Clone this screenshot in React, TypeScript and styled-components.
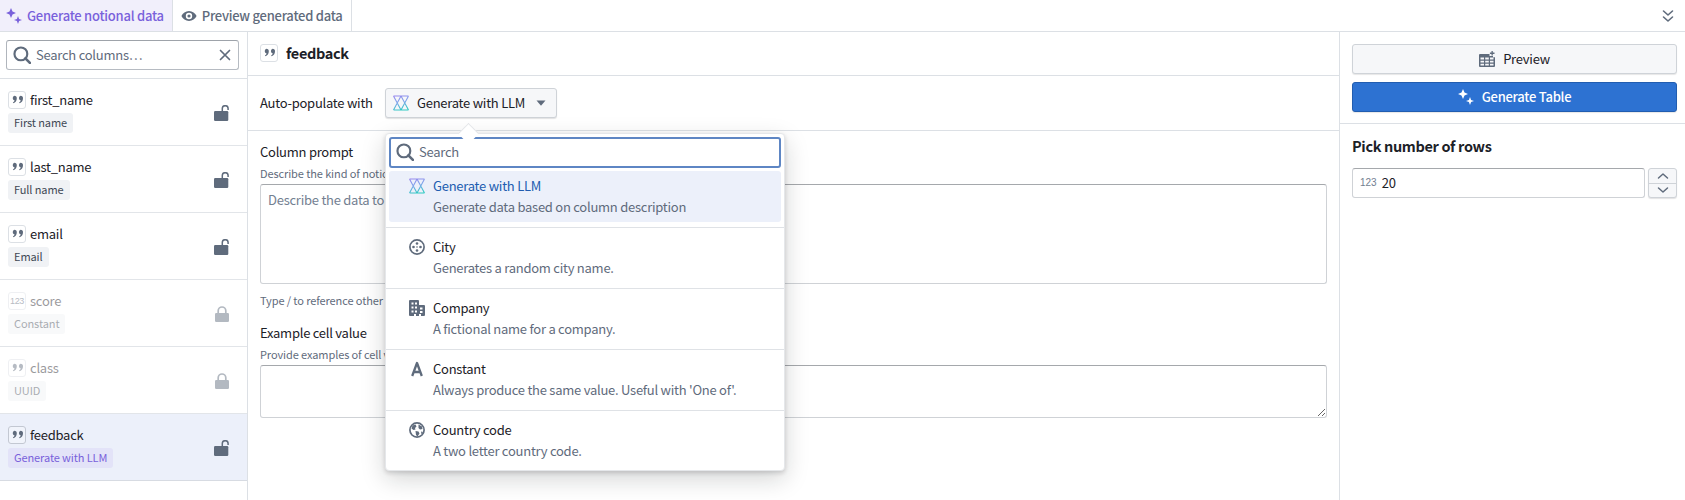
import React from "react";
import styled, { createGlobalStyle } from "styled-components";

const FONT = `"Noto Sans CJK SC", "Source Sans 3", "Noto Sans", sans-serif`;
const Global = createGlobalStyle`
  html, body { margin: 0; padding: 0; background: #fff; }
  body { font-family: ${FONT}; font-size: 13px; letter-spacing: -0.25px; line-height: 20px; color: #1c2127; overflow: hidden; }
  * { box-sizing: border-box; }
`;

const Page = styled.div`display: flex; flex-direction: column; height: 500px; width: 1685px;`;
const TabBar = styled.div`display: flex; height: 32px; flex: none; border-bottom: 1px solid #dce0e5;`;
const Tab = styled.div<{ $active?: boolean }>`
  display: flex; align-items: center; gap: 5px; height: 31px; font-weight: 500; font-size: 13px; letter-spacing: -0.25px;
  padding: ${(p) => (p.$active ? "0 8px 0 6px" : "0 8px 0 8px")};
  border-right: 1px solid #dce0e5;
  background: ${(p) => (p.$active ? "#f1effb" : "#fff")};
  color: ${(p) => (p.$active ? "#7961db" : "#5f6b7c")};
`;
const TabSpacer = styled.div`flex: 1;`;
const CollapseBtn = styled.div`display: flex; align-items: center; padding-right: 11px; color: #5f6b7c;`;
const Body = styled.div`display: flex; flex: 1; min-height: 0;`;

const LeftPanel = styled.aside`width: 248px; flex: none; border-right: 1px solid #dce0e5;`;
const LeftSearchWrap = styled.div`height: 47px; padding: 8px 8px 0 6px; border-bottom: 1px solid #dce0e5;`;
const LeftSearch = styled.div`
  height: 30px; border: 1px solid #b6bbc2; border-radius: 3px; display: flex; align-items: center;
  padding: 0 7px 0 6px; gap: 5px; color: #5f6b7c; border-top-color: #9ea3aa; border-left-color: #b0b5bc;
`;
const SearchText = styled.span`flex: 1; color: #5f6b7c;`;

const Row = styled.div<{ $selected?: boolean }>`
  height: 67px; border-bottom: 1px solid ${(p) => (p.$selected ? "#d7dbe2" : "#e2e5e9")};
  display: flex; align-items: center; justify-content: space-between;
  padding: 0 17px 0 8px;
  background: ${(p) => (p.$selected ? "#ecf0fa" : "#fff")};
`;
const RowMain = styled.div<{ $disabled?: boolean }>`
  display: flex; flex-direction: column; gap: 4px;
  opacity: ${(p) => (p.$disabled ? 0.45 : 1)};
`;
const RowTitle = styled.div`display: flex; align-items: center; gap: 4px; height: 18px;`;
const TypeBox = styled.span`
  width: 18px; height: 18px; flex: none; display: inline-flex; align-items: center; justify-content: center;
  border: 1px solid #dce0e5; border-radius: 3px; background: #fff; color: #5f6b7c;
`;
const SelectedBox = styled(TypeBox)`border-color: #c3c8d2; background: #f1f4fb;`;
const NumGlyph = styled.span`font-family: "Liberation Sans", sans-serif; font-size: 9px; letter-spacing: -0.3px; color: #5f6b7c; line-height: 1;`;
const Tag = styled.span<{ $purple?: boolean }>`
  align-self: flex-start; height: 20px; border-radius: 3px; padding: 0 6px; font-size: 11px; letter-spacing: -0.1px; line-height: 18px;
  background: ${(p) => (p.$purple ? "#e3e3f8" : "#f0f2f5")};
  color: ${(p) => (p.$purple ? "#7961db" : "#404854")};
`;
const LockSlot = styled.span<{ $muted?: boolean }>`
  display: flex; color: ${(p) => (p.$muted ? "#b3b9c1" : "#5f6b7c")}; margin-top: 1px;
`;

const Center = styled.main`flex: 1; min-width: 0; border-right: 1px solid #dce0e5; display: flex; flex-direction: column;`;
const CenterHead = styled.div`
  height: 44px; flex: none; border-bottom: 1px solid #dce0e5; display: flex; align-items: center; gap: 8px;
  padding: 0 12px 2px; font-size: 14.5px; letter-spacing: -0.35px; font-weight: 700;
`;
const AutoRow = styled.div`
  height: 55px; flex: none; border-bottom: 1px solid #dce0e5; display: flex; align-items: center;
  padding: 0 12px;
`;
const AutoLabel = styled.span`width: 125px; flex: none;`;
const SelectAnchor = styled.div`position: relative;`;
const SelectBtn = styled.div`
  width: 172px; height: 30px; display: flex; align-items: center; border-radius: 3px; background: #f6f7f9;
  border: 1px solid #cfd3d8; box-shadow: 0 1px 1px rgba(17, 20, 24, 0.12); padding: 0 10px 0 7px; gap: 8px;
`;
const SelectLabel = styled.span`flex: 1; white-space: nowrap;`;
const Form = styled.div`padding: 11px 12px 0; display: flex; flex-direction: column;`;
const Label = styled.div`height: 20px; line-height: 20px;`;
const Help = styled.div`height: 16px; font-size: 11px; letter-spacing: -0.1px; line-height: 16px; color: #5f6b7c; margin-top: 3px;`;
const Hint = styled(Help)`margin-top: 8px;`;
const Area = styled.textarea<{ $h: number; $resize?: boolean }>`
  display: block; width: 100%; height: ${(p) => p.$h}px; margin-top: 3px; padding: 5px 7px;
  border: 1px solid #cfd2d6; border-top-color: #a5a8ac; border-radius: 3px; outline: none;
  font: 13px/20px ${FONT}; letter-spacing: -0.25px; color: #1c2127; background: #fff;
  resize: ${(p) => (p.$resize ? "vertical" : "none")};
  &::placeholder { color: #738091; opacity: 1; }
`;
const SecondLabel = styled(Label)`margin-top: 15px;`;

const Popover = styled.div`
  position: absolute; left: 0; top: 45px; width: 400px; height: 338px; background: #fff; border-radius: 4px;
  border: 1px solid #e5e7ea; padding: 3px 3px 0;
  box-shadow: 0 2px 4px rgba(17, 20, 24, 0.16), 0 8px 24px rgba(17, 20, 24, 0.18);
  z-index: 5;
`;
const Arrow = styled.span`
  position: absolute; left: 76px; top: 38px; width: 15px; height: 15px; transform: rotate(45deg);
  background: #fff; border: 1px solid #e3e5e8; border-right: 0; border-bottom: 0; z-index: 6;
`;
const PopSearch = styled.div`
  height: 31px; border: 2px solid #5e86c4; border-radius: 3px; display: flex; align-items: center;
  padding: 0 6px 2px 5px; gap: 5px; color: #5f6b7c; margin-bottom: 3px;
`;
const MenuItem = styled.div<{ $active?: boolean }>`
  height: 51px; border-radius: 3px; padding: 5px 0 0 20px; display: grid;
  grid-template-columns: 16px 1fr; column-gap: 8px; grid-template-rows: 20px 22px;
  background: ${(p) => (p.$active ? "#ecf0fa" : "transparent")};
  color: ${(p) => (p.$active ? "#215db0" : "#1c2127")};
`;
const MenuIcon = styled.span`display: flex; align-items: center; color: #5f6b7c;`;
const MenuTitle = styled.span`line-height: 20px;`;
const MenuDesc = styled.span`grid-column: 2; line-height: 22px; color: #5f6b7c;`;
const MenuDivider = styled.div`height: 1px; background: #dfe2e6; margin: 5px -3px 4px;`;

const Right = styled.aside`width: 345px; flex: none;`;
const Actions = styled.div`height: 92px; padding: 12px 8px 0 12px; border-bottom: 1px solid #dce0e5; display: flex; flex-direction: column; gap: 8px;`;
const ActionBtn = styled.div<{ $primary?: boolean }>`
  height: 30px; display: flex; align-items: center; justify-content: center; gap: 8px; border-radius: 3px;
  background: ${(p) => (p.$primary ? "#2d72d2" : "#f6f7f9")};
  color: ${(p) => (p.$primary ? "#fff" : "#1c2127")};
  border: 1px solid ${(p) => (p.$primary ? "#215db0" : "#cfd3d8")};
  box-shadow: 0 1px 1px rgba(17, 20, 24, 0.1);
  font-weight: ${(p) => (p.$primary ? 500 : 400)};
`;
const PreviewIcon = styled.span`display: flex; color: #5f6b7c;`;
const RowsSection = styled.div`padding: 11px 8px 0 12px;`;
const RowsTitle = styled.div`font-size: 14.5px; letter-spacing: -0.35px; line-height: 22px; font-weight: 700; margin-bottom: 11px;`;
const NumberRow = styled.div`display: flex; gap: 3px;`;
const NumberInput = styled.div`
  flex: 1; height: 30px; border: 1px solid #cfd2d6; border-top-color: #a5a8ac; border-radius: 3px; display: flex; align-items: center;
  padding: 0 7px; gap: 5px;
`;
const NumPrefix = styled.span`font-family: "Liberation Sans", sans-serif; font-size: 10px; letter-spacing: 0; color: #738091;`;
const Stepper = styled.div`
  width: 29px; height: 30px; border: 1px solid #cfd3d8; border-radius: 3px; background: #f6f7f9;
  box-shadow: 0 1px 1px rgba(17, 20, 24, 0.12); display: flex; flex-direction: column; color: #5f6b7c;
`;
const StepPart = styled.span<{ $top?: boolean }>`
  flex: 1; display: flex; align-items: center; justify-content: center;
  border-bottom: ${(p) => (p.$top ? "1px solid #cfd3d8" : "0")};
`;

const Search = () => (
  <svg width="18" height="18" viewBox="0 0 16 16" fill="none" stroke="currentColor">
    <circle cx="7" cy="7" r="5.7" strokeWidth="1.9" />
    <path d="M11 11l4 4" strokeWidth="2.4" strokeLinecap="round" />
  </svg>
);
const Cross = () => (
  <svg width="12" height="12" viewBox="0 0 12 12" stroke="currentColor" strokeWidth="1.7" strokeLinecap="round">
    <path d="M1.5 1.5l9 9M10.5 1.5l-9 9" />
  </svg>
);
const Sparkles = () => (
  <svg width="16" height="16" viewBox="0 0 16 16" fill="currentColor">
    <path d="M5 0l1.500 3.500L10 5 6.500 6.500 5 10 3.500 6.500 0 5l3.500-1.500z" />
    <path d="M12 8l1.100 2.900L16 12l-2.900 1.100L12 16l-1.100-2.900L8 12l2.900-1.100z" />
  </svg>
);
const Eye = () => (
  <svg width="16" height="16" viewBox="0 0 16 16" fill="currentColor">
    <path fillRule="evenodd" d="M8 3c3.400 0 6.200 2.200 7.600 5-1.400 2.800-4.200 5-7.600 5S1.800 10.800.4 8C1.800 5.200 4.600 3 8 3zm0 1.800a3.200 3.200 0 1 0 0 6.400 3.200 3.200 0 0 0 0-6.400zM8 6.400a1.600 1.600 0 1 1 0 3.200 1.600 1.600 0 0 1 0-3.200z" />
  </svg>
);
const DoubleChevron = () => (
  <svg width="12" height="14" viewBox="0 0 12 14" fill="none" stroke="currentColor" strokeWidth="1.6" strokeLinecap="round" strokeLinejoin="round">
    <path d="M1.500 2l4.500 4 4.500-4M1.500 8l4.500 4 4.500-4" />
  </svg>
);
const Quote = () => (
  <svg width="13" height="12" viewBox="0 0 13 12" fill="currentColor">
    <path d="M3.300 1.800a2.500 2.500 0 0 1 2.500 2.600c0 2.300-1.300 4-3.400 4.900l-.5-.9c1-.6 1.500-1.200 1.700-2A2.400 2.400 0 0 1 3.300 1.800z" />
    <path d="M9.500 1.800a2.500 2.500 0 0 1 2.500 2.600c0 2.300-1.300 4-3.400 4.900l-.5-.9c1-.6 1.500-1.200 1.700-2a2.400 2.400 0 0 1-.3-4.600z" />
  </svg>
);
const Unlock = () => (
  <svg width="16" height="16" viewBox="0 0 16 16" fill="currentColor">
    <rect x="0" y="6" width="14.300" height="10" rx="1.200" />
    <path d="M8.300 6.500V3.600a2.900 2.900 0 0 1 5.800 0V5" fill="none" stroke="currentColor" strokeWidth="1.500" />
  </svg>
);
const Lock = () => (
  <svg width="16" height="16" viewBox="0 0 16 16" fill="currentColor">
    <rect x="1" y="7" width="14" height="9" rx="1.300" />
    <path d="M4.200 7.500V4.800a3.800 3.800 0 0 1 7.600 0v2.700" fill="none" stroke="currentColor" strokeWidth="1.700" />
  </svg>
);
const Caret = () => (
  <svg width="10" height="6" viewBox="0 0 10 6" fill="#5f6b7c"><path d="M.5.500h9L5 5.700z" /></svg>
);
const Llm = ({ id }: { id: string }) => (
  <svg width="16" height="16" viewBox="0 0 16 16" fill="none" strokeWidth="1.100">
    <defs>
      <linearGradient id={id} gradientUnits="userSpaceOnUse" x1="2" y1="0" x2="6" y2="16">
        <stop offset="0" stopColor="#9a85ee" />
        <stop offset="0.5" stopColor="#7ea6ea" />
        <stop offset="1" stopColor="#2fcac2" />
      </linearGradient>
    </defs>
    <path stroke={`url(#${id})`} d="M.5 1h15M.5 15h15M.5 1l7.500 14M8 1L.5 15M8 1l7.500 14M15.500 1L8 15" />
  </svg>
);
const City = () => (
  <svg width="16" height="16" viewBox="0 0 16 16" fill="currentColor">
    <circle cx="8" cy="8" r="7.100" fill="none" stroke="currentColor" strokeWidth="1.700" />
    <circle cx="8" cy="4.500" r="1.300" /><circle cx="8" cy="11.500" r="1.300" />
    <circle cx="4.500" cy="8" r="1.300" /><circle cx="11.500" cy="8" r="1.300" /><circle cx="8" cy="8" r=".8" />
  </svg>
);
const Company = () => (
  <svg width="16" height="16" viewBox="0 0 16 16" fill="currentColor">
    <path fillRule="evenodd" d="M0 1a1 1 0 0 1 1-1h8a1 1 0 0 1 1 1v4h5a1 1 0 0 1 1 1v9a1 1 0 0 1-1 1H1a1 1 0 0 1-1-1zM2.500 2.500v2h2v-2zM6 2.500v2h2v-2zM2.500 6.500v2h2v-2zM6 6.500v2h2v-2zM11 7.500v2h2.500v-2zM2.500 10.500v2h2v-2zM6 10.500v2h2v-2zM11 11v2h2.500v-2zM5 14v2h2v-2zM10 14v2h2v-2z" />
  </svg>
);
const LetterA = () => (
  <svg width="16" height="16" viewBox="0 0 16 16" fill="none" stroke="currentColor" strokeWidth="2.300" strokeLinejoin="round">
    <path d="M3.200 15L8 2l4.800 13M4.800 11h6.400" />
  </svg>
);
const Globe = () => (
  <svg width="16" height="16" viewBox="0 0 16 16" fill="currentColor">
    <circle cx="8" cy="8" r="7.100" fill="none" stroke="currentColor" strokeWidth="1.700" />
    <path d="M3.500 3.500L6.500 2.500 7.500 4.500 6 6 6.500 7.500 4.500 8 2.500 6.500zM9.500 2.500L13 4.500 13.500 7 11 7.500 9.500 6zM6.500 9l3 .5 1 2-2 3-1.500-1.500zM12 9.500l2 .5-1.500 2.500z" />
  </svg>
);
const TableAdd = () => (
  <svg width="16" height="16" viewBox="0 0 16 16" fill="currentColor">
    <path fillRule="evenodd" d="M1 3h9.500v2H14V6.200h2V15a1 1 0 0 1-1 1H1a1 1 0 0 1-1-1V4a1 1 0 0 1 1-1zM1.500 6.500V8.500H5V6.500zM6.200 6.500V8.500H9.800V6.500zM11 6.500V8.500H14.500V6.500zM1.500 9.800V11.500H5V9.800zM6.200 9.800V11.500H9.800V9.800zM11 9.800V11.500H14.500V9.800zM1.500 12.800V14.500H5V12.800zM6.200 12.800V14.500H9.800V12.800zM11 12.800V14.500H14.500V12.800z" />
    <path d="M12.500 0h1.300v1.600h1.700v1.300h-1.700v1.600h-1.300V2.900h-1.600V1.600h1.600z" />
  </svg>
);
const ChevUp = () => (
  <svg width="12" height="8" viewBox="0 0 12 8" fill="none" stroke="currentColor" strokeWidth="1.500" strokeLinecap="round" strokeLinejoin="round"><path d="M1.500 6L6 2l4.500 4" /></svg>
);
const ChevDown = () => (
  <svg width="12" height="8" viewBox="0 0 12 8" fill="none" stroke="currentColor" strokeWidth="1.500" strokeLinecap="round" strokeLinejoin="round"><path d="M1.500 2L6 6l4.500-4" /></svg>
);

type Col = { name: string; tag: string; num?: boolean; disabled?: boolean; selected?: boolean };
const columns: Col[] = [
  { name: "first_name", tag: "First name" },
  { name: "last_name", tag: "Full name" },
  { name: "email", tag: "Email" },
  { name: "score", tag: "Constant", num: true, disabled: true },
  { name: "class", tag: "UUID", disabled: true },
  { name: "feedback", tag: "Generate with LLM", selected: true },
];

const menu = [
  { title: "City", desc: "Generates a random city name.", icon: <City /> },
  { title: "Company", desc: "A fictional name for a company.", icon: <Company /> },
  { title: "Constant", desc: "Always produce the same value. Useful with 'One of'.", icon: <LetterA /> },
  { title: "Country code", desc: "A two letter country code.", icon: <Globe /> },
];

export default function App() {
  return (
    <Page>
      <Global />
      <TabBar>
        <Tab $active><Sparkles />Generate notional data</Tab>
        <Tab><Eye />Preview generated data</Tab>
        <TabSpacer />
        <CollapseBtn><DoubleChevron /></CollapseBtn>
      </TabBar>
      <Body>
        <LeftPanel>
          <LeftSearchWrap>
            <LeftSearch>
              <Search />
              <SearchText>Search columns…</SearchText>
              <Cross />
            </LeftSearch>
          </LeftSearchWrap>
          {columns.map((c) => {
            const Box = c.selected ? SelectedBox : TypeBox;
            return (
              <Row key={c.name} $selected={c.selected}>
                <RowMain $disabled={c.disabled}>
                  <RowTitle>
                    <Box>{c.num ? <NumGlyph>123</NumGlyph> : <Quote />}</Box>
                    {c.name}
                  </RowTitle>
                  <Tag $purple={c.selected}>{c.tag}</Tag>
                </RowMain>
                <LockSlot $muted={c.disabled}>{c.disabled ? <Lock /> : <Unlock />}</LockSlot>
              </Row>
            );
          })}
        </LeftPanel>
        <Center>
          <CenterHead><TypeBox><Quote /></TypeBox>feedback</CenterHead>
          <AutoRow>
            <AutoLabel>Auto-populate with</AutoLabel>
            <SelectAnchor>
              <SelectBtn>
                <Llm id="llm-a" />
                <SelectLabel>Generate with LLM</SelectLabel>
                <Caret />
              </SelectBtn>
              <Arrow />
              <Popover>
                <PopSearch>
                  <Search />
                  <SearchText>Search</SearchText>
                </PopSearch>
                <MenuItem $active>
                  <MenuIcon><Llm id="llm-b" /></MenuIcon>
                  <MenuTitle>Generate with LLM</MenuTitle>
                  <MenuDesc>Generate data based on column description</MenuDesc>
                </MenuItem>
                {menu.map((m) => (
                  <React.Fragment key={m.title}>
                    <MenuDivider />
                    <MenuItem>
                      <MenuIcon>{m.icon}</MenuIcon>
                      <MenuTitle>{m.title}</MenuTitle>
                      <MenuDesc>{m.desc}</MenuDesc>
                    </MenuItem>
                  </React.Fragment>
                ))}
              </Popover>
            </SelectAnchor>
          </AutoRow>
          <Form>
            <Label>Column prompt</Label>
            <Help>Describe the kind of notional data this column should hold</Help>
            <Area $h={100} placeholder="Describe the data to generate for this column" readOnly />
            <Hint>Type / to reference other columns</Hint>
            <SecondLabel>Example cell value</SecondLabel>
            <Help>Provide examples of cell values to guide the generation</Help>
            <Area $h={53} $resize readOnly />
          </Form>
        </Center>
        <Right>
          <Actions>
            <ActionBtn><PreviewIcon><TableAdd /></PreviewIcon>Preview</ActionBtn>
            <ActionBtn $primary><Sparkles />Generate Table</ActionBtn>
          </Actions>
          <RowsSection>
            <RowsTitle>Pick number of rows</RowsTitle>
            <NumberRow>
              <NumberInput><NumPrefix>123</NumPrefix>20</NumberInput>
              <Stepper>
                <StepPart $top><ChevUp /></StepPart>
                <StepPart><ChevDown /></StepPart>
              </Stepper>
            </NumberRow>
          </RowsSection>
        </Right>
      </Body>
    </Page>
  );
}
